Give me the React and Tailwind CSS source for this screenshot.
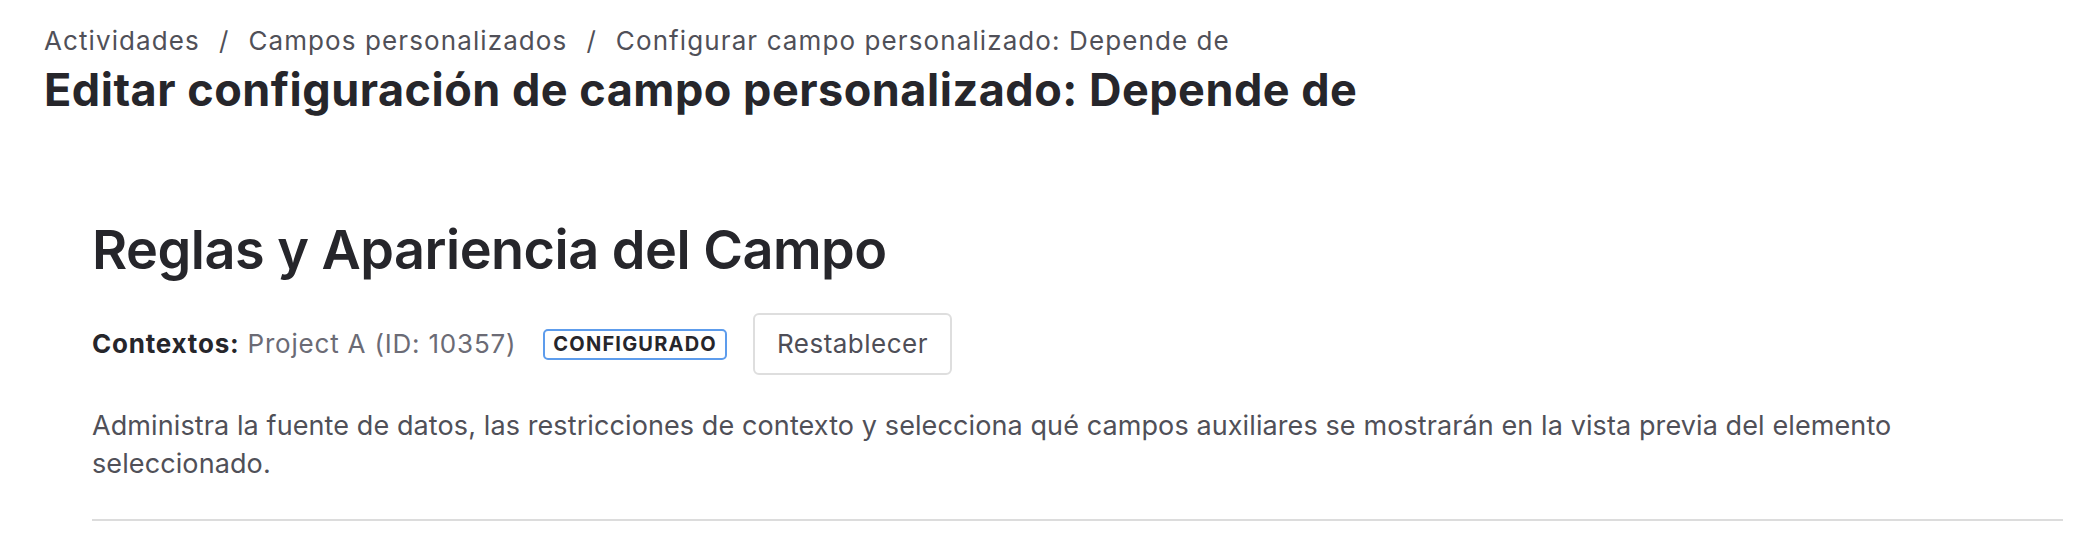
export default function App() {
  return (
    <div className="min-h-screen bg-white pl-[44px] pr-[27px] pt-[23px] font-['Inter','Liberation_Sans',sans-serif] text-[#26262b]">
      {/* Page header */}
      <nav className="flex items-center text-[26px] leading-[36px] tracking-[1.1px] text-[#505058]">
        <span>Actividades</span>
        <span className="px-[19px]">/</span>
        <span>Campos personalizados</span>
        <span className="px-[19px]">/</span>
        <span>Configurar campo personalizado: Depende de</span>
      </nav>
      <h1 className="mt-[4px] text-[45px] font-bold leading-[54px] tracking-[0.5px] text-[#26262b]">
        Editar configuración de campo personalizado: Depende de
      </h1>

      {/* Section */}
      <section className="mt-[101px] pl-[48px]">
        <h2 className="text-[54px] font-semibold leading-[64px] tracking-[-0.5px] text-[#26262b]">
          Reglas y Apariencia del Campo
        </h2>
        <div className="mt-[31px] flex items-center text-[26px] leading-[36px] tracking-[0.8px]">
          <span className="font-bold text-[#26262b]">Contextos:</span>
          <span className="ml-[8px] text-[#6b6b75]">Project A (ID: 10357)</span>
          <span className="ml-[27px] rounded-[5px] border-2 border-[#5d9cec] px-[8px] text-[20px] font-bold leading-[27px] uppercase tracking-[1.2px] text-[#26262b]">
            Configurado
          </span>
          <button className="ml-[26px] h-[62px] rounded-[6px] border-2 border-[#dedede] bg-white px-[22px] text-[26px] tracking-[0.5px] text-[#4e4e57]">
            Restablecer
          </button>
        </div>
        <p className="mt-[32px] max-w-[1845px] text-[27px] leading-[38px] tracking-[0.1px] text-[#505058]">
          Administra la fuente de datos, las restricciones de contexto y selecciona qué campos auxiliares se mostrarán en la vista previa del elemento seleccionado.
        </p>
        <hr className="mt-[36px] border-t-2 border-[#dcdcdc]" />
      </section>
    </div>
  );
}
